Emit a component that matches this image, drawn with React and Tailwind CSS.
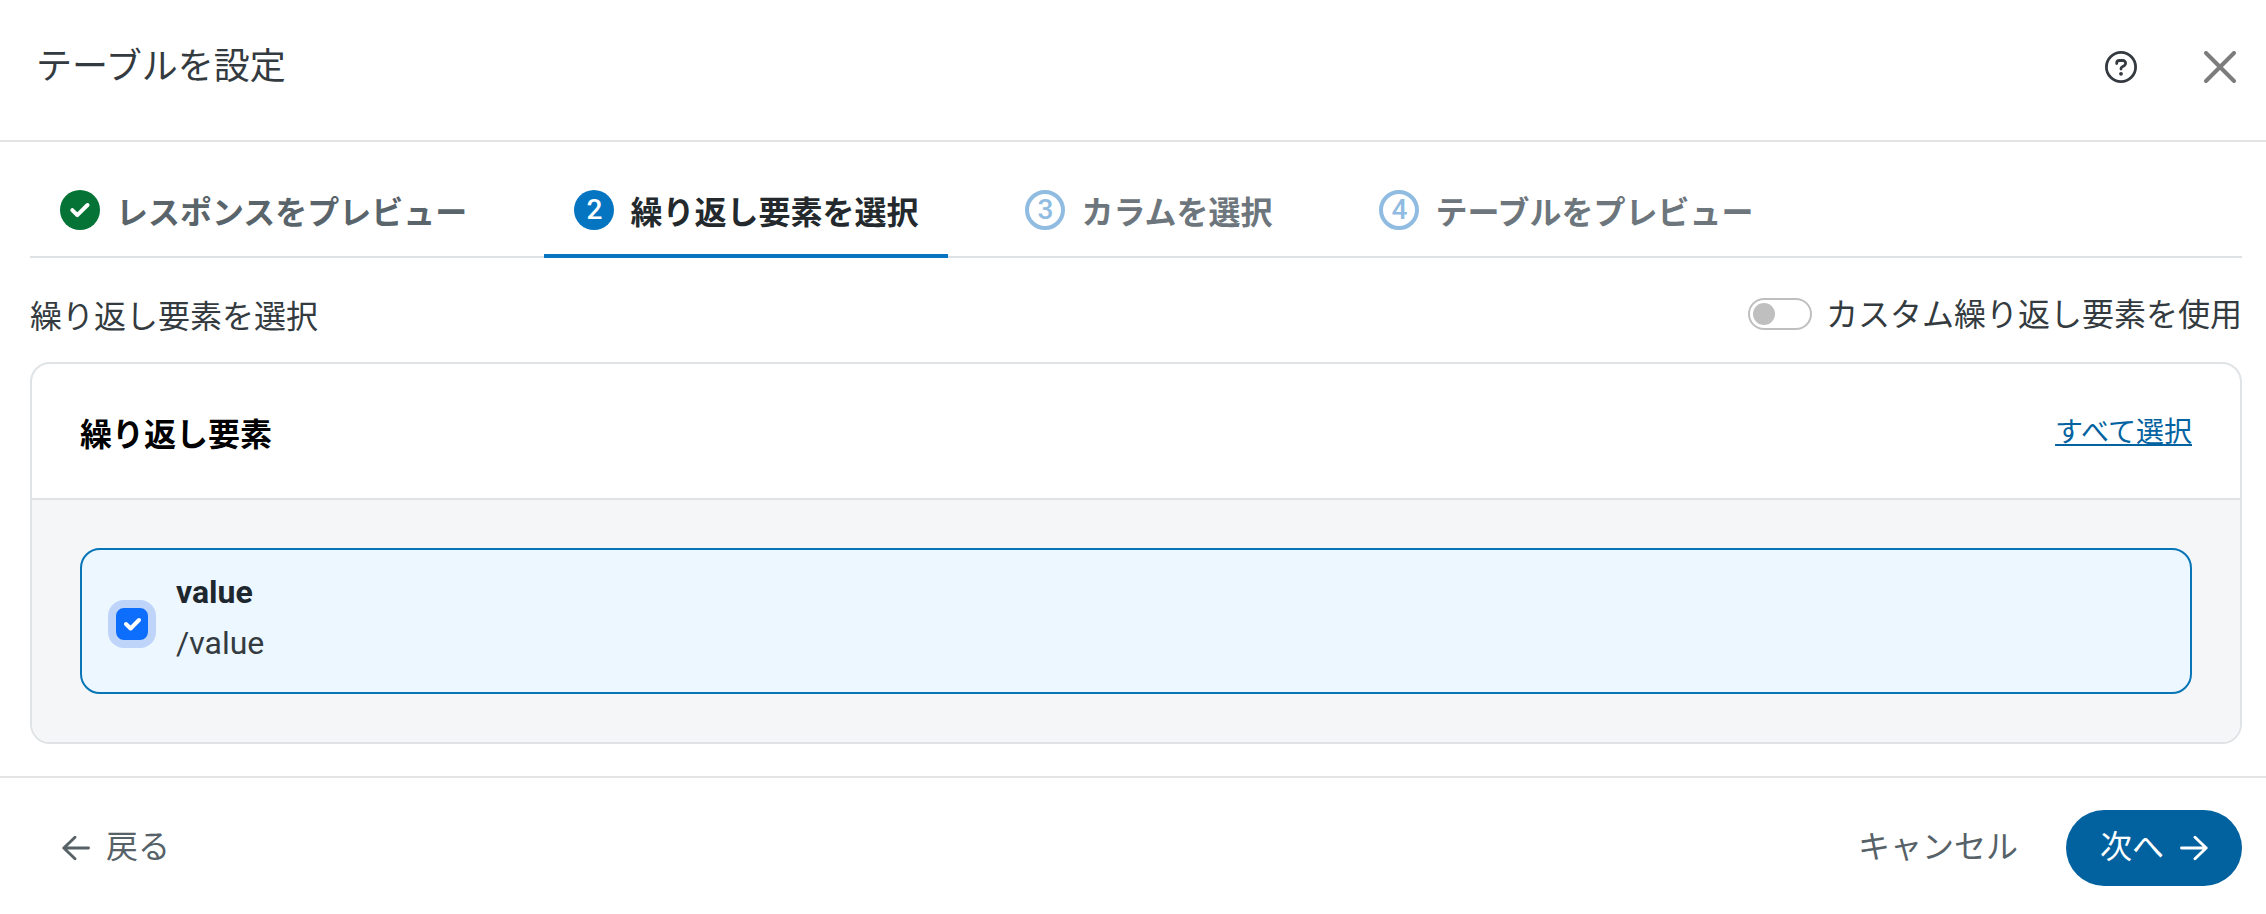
import { useState } from 'react';

const steps = [
  { id: 1, label: 'レスポンスをプレビュー', state: 'done' },
  { id: 2, label: '繰り返し要素を選択', state: 'active' },
  { id: 3, label: 'カラムを選択', state: 'todo' },
  { id: 4, label: 'テーブルをプレビュー', state: 'todo' },
];

const stepText = {
  done: 'text-[#59646b]',
  active: 'text-[#23292d]',
  todo: 'text-[#6d767c]',
};

const badgeStyle = {
  active: 'bg-[#0675c1] text-white',
  todo: 'border-4 border-[#8fbce0] text-[#8fbce0]',
};

function HelpIcon() {
  return (
    <svg className="size-8" viewBox="0 0 32 32" fill="none" stroke="#343a3f" strokeWidth="2.8" strokeLinecap="round" strokeLinejoin="round" aria-hidden="true">
      <circle cx="16" cy="16" r="14.6" />
      <path d="M11.7 12.6v-.4c0-1.5 1.2-2.7 2.7-2.7h3.4c1.5 0 2.8 1.2 2.8 2.8 0 1-.5 1.9-1.4 2.4l-2.1 1.2c-.7.4-1.1 1.1-1.1 1.9v.2" />
      <circle cx="16" cy="22.8" r="1.9" fill="#343a3f" stroke="none" />
    </svg>
  );
}

function CloseIcon() {
  return (
    <svg className="size-8" viewBox="0 0 32 32" fill="none" stroke="#7c7c7c" strokeWidth="4" strokeLinecap="round" aria-hidden="true">
      <path d="M2 2l28 28M30 2L2 30" />
    </svg>
  );
}

function ArrowIcon({ back }) {
  return (
    <svg className="h-7 w-7 shrink-0" viewBox="0 0 28 28" fill="none" stroke="currentColor" strokeWidth="2.9" strokeLinecap="round" strokeLinejoin="round" aria-hidden="true">
      {back ? <path d="M26.5 14H1.8M13 3.2L1.8 14 13 24.8" /> : <path d="M1.5 14h24.7M15 3.2L26.2 14 15 24.8" />}
    </svg>
  );
}

function StepBadge({ step }) {
  if (step.state === 'done') {
    return (
      <svg className="size-10 shrink-0" viewBox="0 0 40 40" fill="none" aria-hidden="true">
        <circle cx="20" cy="20" r="20" fill="#047335" />
        <path d="M12.3 20.2l5 5L27.5 15" stroke="#fff" strokeWidth="4" strokeLinecap="round" strokeLinejoin="round" />
      </svg>
    );
  }
  return (
    <span className={`flex size-10 shrink-0 items-center justify-center rounded-full text-[28px] leading-8 font-medium ${badgeStyle[step.state]}`}>
      {step.id}
    </span>
  );
}

export default function App() {
  const [custom, setCustom] = useState(false);
  const [selected, setSelected] = useState(true);

  return (
    <div role="dialog" aria-labelledby="dialog-title" lang="ja" className="bg-white font-[Roboto,'Noto_Sans_CJK_JP',sans-serif] text-[32px] leading-12 text-[#343b40]">
      <header className="flex items-center justify-between border-b-2 border-[#e3e4e5] pt-[41px] pr-[30px] pb-[47px] pl-9">
        <h1 id="dialog-title" className="text-[36px] leading-[52px]">テーブルを設定</h1>
        <div className="flex items-center gap-[67px]">
          <button type="button" aria-label="ヘルプ"><HelpIcon /></button>
          <button type="button" aria-label="閉じる"><CloseIcon /></button>
        </div>
      </header>

      <main className="pr-6 pb-8 pl-[30px]">
        <nav className="flex gap-[47px] border-b-2 border-[#dfe2e4]">
          {steps.map((step) => (
            <button
              key={step.id}
              type="button"
              aria-current={step.state === 'active' ? 'step' : undefined}
              className={`-mb-0.5 flex items-center gap-4 border-b-4 px-[30px] pt-[41px] pb-[17px] font-bold ${stepText[step.state]} ${step.state === 'active' ? 'border-[#0675c1]' : 'border-transparent'}`}
            >
              <StepBadge step={step} />
              <span className="pt-1.5">{step.label}</span>
            </button>
          ))}
        </nav>

        <div className="flex items-center justify-between pt-[29px] pb-[21px]">
          <h2 className="pt-1.5">繰り返し要素を選択</h2>
          <label className="flex items-center gap-[14px]">
            <input
              type="checkbox"
              role="switch"
              checked={custom}
              onChange={(e) => setCustom(e.target.checked)}
              className="h-8 w-16 appearance-none rounded-full border-2 border-[#bfbfbf] bg-white p-[3px] before:block before:size-[22px] before:rounded-full before:bg-[#bfbfbf] checked:before:ml-auto"
            />
            <span className="pt-0.5">カスタム繰り返し要素を使用</span>
          </label>
        </div>

        <section className="overflow-hidden rounded-[20px] border-2 border-[#e0e3e5]">
          <div className="flex items-center justify-between border-b-2 border-[#e0e3e5] px-12 py-[39px]">
            <h3 className="pt-2 font-bold text-black">繰り返し要素</h3>
            <a href="#all" className="pt-1 text-[28px] leading-10 text-[#0363a0] underline decoration-2 underline-offset-2">すべて選択</a>
          </div>
          <div className="bg-[#f4f6f8] p-12">
            <label className="flex items-center gap-7 rounded-[20px] border-2 border-[#0875b7] bg-[#ecf7ff] pt-[17px] pb-[23px] pl-[34px]">
              <span className="mt-3 grid size-8 shrink-0 place-items-center">
                <input
                  type="checkbox"
                  checked={selected}
                  onChange={(e) => setSelected(e.target.checked)}
                  className="col-start-1 row-start-1 size-8 appearance-none rounded-lg border-2 border-[#0d6efd] bg-white ring-8 ring-[#bed4f9] checked:bg-[#0d6efd]"
                />
                {selected && (
                  <svg className="pointer-events-none z-10 col-start-1 row-start-1 size-8" viewBox="0 0 32 32" fill="none" stroke="#fff" strokeWidth="4" strokeLinecap="round" strokeLinejoin="round" aria-hidden="true">
                    <path d="M10 16l4.6 4.5L23 12" />
                  </svg>
                )}
              </span>
              <span className="flex flex-col leading-[51px]">
                <span className="font-bold text-[#1e272e]">value</span>
                <span>/value</span>
              </span>
            </label>
          </div>
        </section>
      </main>

      <footer className="flex items-center justify-between border-t-2 border-[#e3e4e5] pt-8 pr-6 pb-7 pl-[62px] text-[#566168]">
        <button type="button" className="flex items-center gap-4">
          <ArrowIcon back />
          <span className="pb-0.5">戻る</span>
        </button>
        <div className="flex items-center gap-12">
          <button type="button" className="pb-0.5">キャンセル</button>
          <button type="button" className="flex items-center gap-4 rounded-full bg-[#0262a0] px-[34px] py-[13px] text-white">
            <span className="pb-0.5">次へ</span>
            <ArrowIcon />
          </button>
        </div>
      </footer>
    </div>
  );
}
